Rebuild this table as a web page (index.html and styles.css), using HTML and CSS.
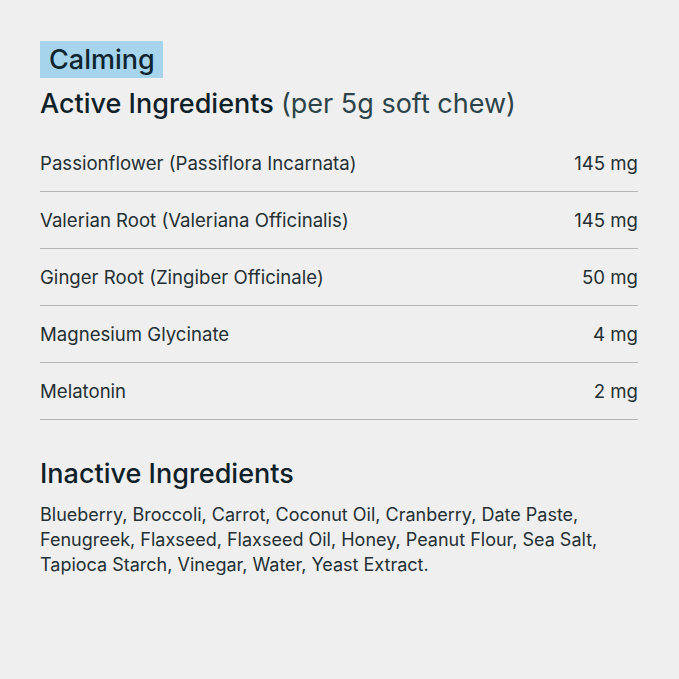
FILE: index.html
```html
<!DOCTYPE html>
<html lang="en">
<head>
  <meta charset="UTF-8">
  <title>Calming Ingredients</title>
  <link rel="stylesheet" href="styles.css">
</head>
<body>
  <div class="panel">
    <span class="badge">Calming</span>
    <h1>Active Ingredients <span class="note">(per 5g soft chew)</span></h1>

    <ul class="rows">
      <li><span>Passionflower (Passiflora Incarnata)</span><span>145 mg</span></li>
      <li><span>Valerian Root (Valeriana Officinalis)</span><span>145 mg</span></li>
      <li><span>Ginger Root (Zingiber Officinale)</span><span>50 mg</span></li>
      <li><span>Magnesium Glycinate</span><span>4 mg</span></li>
      <li><span>Melatonin</span><span>2 mg</span></li>
    </ul>

    <h2>Inactive Ingredients</h2>
    <p>Blueberry, Broccoli, Carrot, Coconut Oil, Cranberry, Date Paste, Fenugreek, Flaxseed, Flaxseed Oil, Honey, Peanut Flour, Sea Salt, Tapioca Starch, Vinegar, Water, Yeast Extract.</p>
  </div>
</body>
</html>
```

FILE: styles.css
```css
body {
  margin: 0;
  background-color: #efefef;
  font-family: Inter, 'Liberation Sans', sans-serif;
  color: #1f2a2e;
}
.panel {
  padding: 41px 41px 0 40px;
}
.badge {
  display: inline-block;
  background-color: #a6d4ec;
  color: #0e2530;
  font-size: 27px;
  font-weight: 500;
  line-height: 37px;
  padding: 0 8px 0 9px;
}
h1 {
  margin: 7px 0 0 0;
  font-size: 27px;
  line-height: 38px;
  font-weight: 500;
  color: #0f2128;
}
.note {
  font-weight: 400;
  color: #2c434a;
}
.rows {
  list-style: none;
  margin: 12px 0 0 0;
  padding: 0;
}
.rows li {
  display: flex;
  justify-content: space-between;
  height: 56px;
  line-height: 56px;
  border-bottom: 1px solid #b5b5b5;
  font-size: 18.6px;
  color: #253034;
}
h2 {
  margin: 37px 0 0 0;
  font-size: 27px;
  line-height: 34px;
  font-weight: 500;
  color: #0f2128;
}
p {
  margin: 11px 0 0 0;
  font-size: 18px;
  line-height: 25px;
  color: #253034;
  max-width: 590px;
}
```
